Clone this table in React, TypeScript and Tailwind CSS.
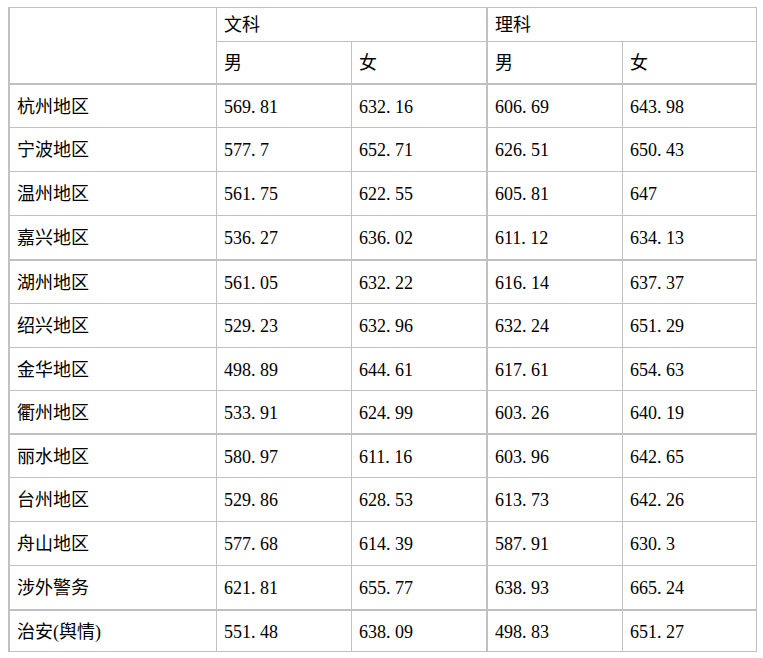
import React from "react";

const rows: { name: string; v: string[]; h: string; b: string }[] = [
  { name: "杭州地区", v: ["569.81", "632.16", "606.69", "643.98"], h: "h-[43px]", b: "border-b" },
  { name: "宁波地区", v: ["577.7", "652.71", "626.51", "650.43"], h: "h-[44px]", b: "border-b" },
  { name: "温州地区", v: ["561.75", "622.55", "605.81", "647"], h: "h-[44px]", b: "border-b" },
  { name: "嘉兴地区", v: ["536.27", "636.02", "611.12", "634.13"], h: "h-[45px]", b: "border-b-2" },
  { name: "湖州地区", v: ["561.05", "632.22", "616.14", "637.37"], h: "h-[43px]", b: "border-b" },
  { name: "绍兴地区", v: ["529.23", "632.96", "632.24", "651.29"], h: "h-[44px]", b: "border-b" },
  { name: "金华地区", v: ["498.89", "644.61", "617.61", "654.63"], h: "h-[43px]", b: "border-b" },
  { name: "衢州地区", v: ["533.91", "624.99", "603.26", "640.19"], h: "h-[44px]", b: "border-b-2" },
  { name: "丽水地区", v: ["580.97", "611.16", "603.96", "642.65"], h: "h-[43px]", b: "border-b" },
  { name: "台州地区", v: ["529.86", "628.53", "613.73", "642.26"], h: "h-[44px]", b: "border-b" },
  { name: "舟山地区", v: ["577.68", "614.39", "587.91", "630.3"], h: "h-[44px]", b: "border-b" },
  { name: "涉外警务", v: ["621.81", "655.77", "638.93", "665.24"], h: "h-[45px]", b: "border-b-2" },
  { name: "治安(舆情)", v: ["551.48", "638.09", "498.83", "651.27"], h: "h-[41px]", b: "border-b" },
];

const font = "font-['Liberation_Serif','Noto_Sans_CJK_SC',serif]";
const cols = "grid grid-cols-[207px_135px_136px_135px_134px]";

function Num({ s }: { s: string }) {
  const parts = s.split(".");
  return (
    <span className="whitespace-nowrap">
      {parts[0]}
      {parts.length > 1 && (
        <>
          <span className="inline-block w-[9px]">.</span>
          {parts[1]}
        </>
      )}
    </span>
  );
}

export default function App() {
  return (
    <div className={`min-h-[658px] w-[763px] bg-white pl-2 pt-[7px] text-black ${font}`}>
      <div className="w-[749px] border-l-2 border-t border-[#c0c0c0]">
        <div className={`${cols} grid-rows-[34px_43px]`}>
          <div className="row-span-2 border-b-2 border-r border-[#c0c0c0]" />
          <div className="col-span-2 flex items-center border-b border-r-2 border-[#c0c0c0] pl-[7px] pt-[2px] text-[18px]">文科</div>
          <div className="col-span-2 flex items-center border-b border-r border-[#c0c0c0] pl-[7px] pt-[2px] text-[18px]">理科</div>
          <div className="flex items-center border-b-2 border-r border-[#c0c0c0] pl-[7px] pt-[2px] text-[18px]">男</div>
          <div className="flex items-center border-b-2 border-r-2 border-[#c0c0c0] pl-[7px] pt-[2px] text-[18px]">女</div>
          <div className="flex items-center border-b-2 border-r border-[#c0c0c0] pl-[7px] pt-[2px] text-[18px]">男</div>
          <div className="flex items-center border-b-2 border-r border-[#c0c0c0] pl-[7px] pt-[2px] text-[18px]">女</div>
        </div>
        {rows.map((r) => (
          <div key={r.name} className={`${cols} ${r.h}`}>
            <div className={`flex items-center ${r.b} border-r border-[#c0c0c0] pl-[7px] pt-[2px] text-[18px]`}>{r.name}</div>
            <div className={`flex items-center ${r.b} border-r border-[#c0c0c0] pl-[7px] pt-[2px] text-[18px]`}><Num s={r.v[0]} /></div>
            <div className={`flex items-center ${r.b} border-r-2 border-[#c0c0c0] pl-[7px] pt-[2px] text-[18px]`}><Num s={r.v[1]} /></div>
            <div className={`flex items-center ${r.b} border-r border-[#c0c0c0] pl-[7px] pt-[2px] text-[18px]`}><Num s={r.v[2]} /></div>
            <div className={`flex items-center ${r.b} border-r border-[#c0c0c0] pl-[7px] pt-[2px] text-[18px]`}><Num s={r.v[3]} /></div>
          </div>
        ))}
      </div>
    </div>
  );
}
